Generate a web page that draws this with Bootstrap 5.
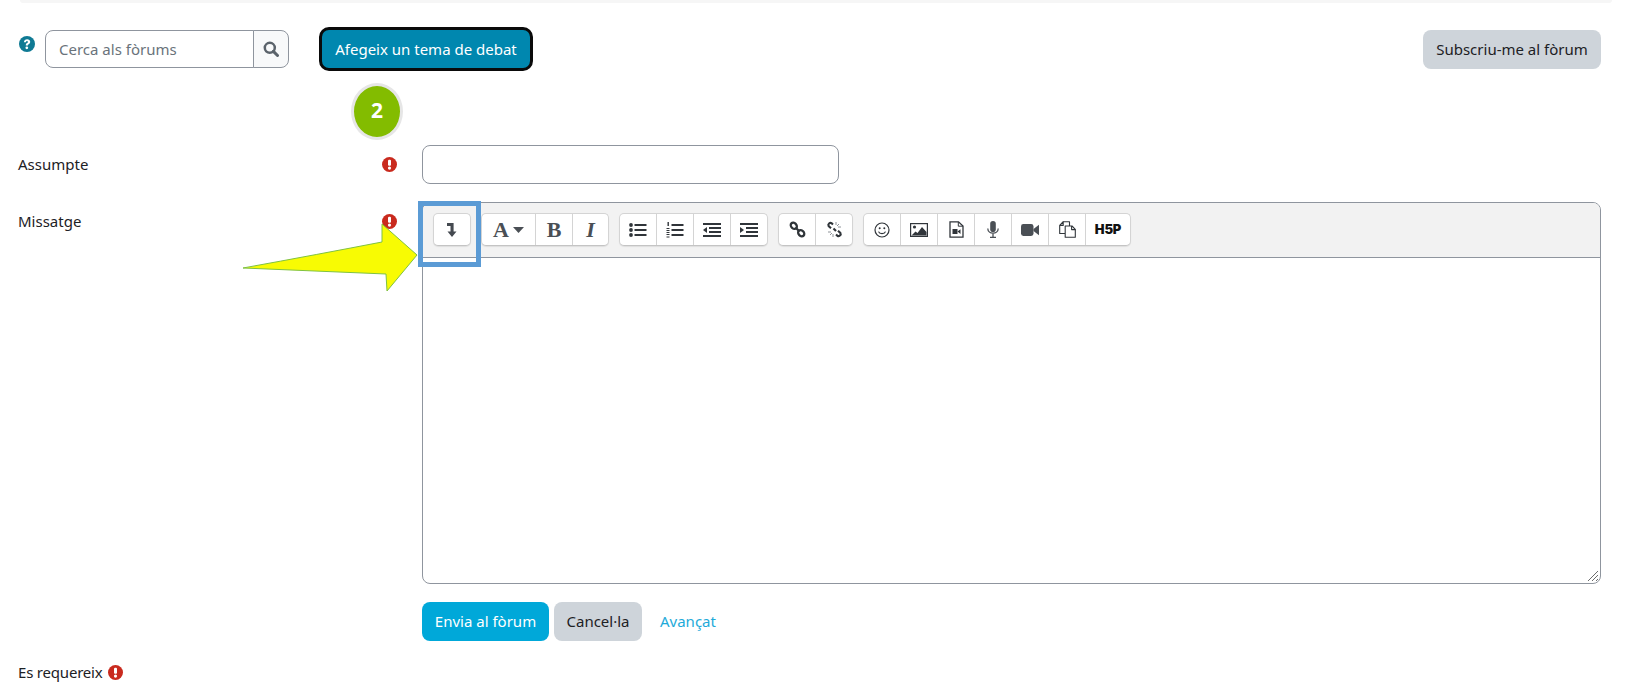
<!DOCTYPE html>
<html>
<head>
<meta charset="utf-8">
<title>Afegeix un tema de debat</title>
<link href="https://cdn.jsdelivr.net/npm/bootstrap@5.3.0/dist/css/bootstrap.min.css" rel="stylesheet">
<style>
html,body{height:693px;overflow:hidden;background:#fff}
body{position:relative;font-family:"Noto Sans","Open Sans",sans-serif;font-size:15px;color:#1d2125;font-variant-ligatures:none;font-feature-settings:"liga" 0,"locl" 0,"ccmp" 0}
.topline{height:3px;margin:0 32px 0 20px;background:#f6f6f6;border-radius:0 0 4px 4px}
.pagewrap{padding:0 43px 0 19px}
.actionbar{height:86px;padding-top:24px}
.help-ic{width:16px;height:16px;margin:9px 9px 0 0;flex:none}
.searchgrp{width:244px;height:38px;margin-top:3px;margin-left:1px}
.searchgrp .form-control{height:38px;font-size:15px;border-color:#8f959e;border-radius:8px 0 0 8px;padding:0 13px;color:#495057;box-shadow:none}
.searchgrp .form-control::placeholder{color:#6a737b;opacity:1}
.searchbtn{width:36px;background:#f8f9fa;border:1px solid #8f959e;border-radius:0 8px 8px 0;padding:0;margin-left:-1px}
.addbtn{margin-left:30px;width:214px;height:44px;background:#0087af;color:#fff;border:3px solid #0a0a0a;border-radius:10px;font-size:15px;padding:0;box-shadow:none}
.addbtn:hover{background:#0087af;color:#fff;border-color:#0a0a0a}
.subbtn{width:178px;height:39px;margin-top:3px;background:#ced4da;color:#1d2125;border:0;border-radius:8px;font-size:15px;padding:0}
.subbtn:hover{background:#ced4da;color:#1d2125}
.form-rows{--bs-gutter-x:30px}
.row-subject{padding-top:56px;height:113px}
.field-label{font-size:15px;line-height:20px;margin-top:9px;margin-left:-1px}
.labelcell{display:flex;justify-content:space-between;align-items:flex-start}
.req-ic{width:15px;height:15px;margin-top:12px;margin-right:-5px;flex:none}
.subjectinput{width:417px;height:39px;border-color:#8f959e;border-radius:8px;box-shadow:none}
.editorbox{height:382px;border:1px solid #8f959e;border-radius:8px;overflow:hidden;position:relative}
.edtoolbar{height:55px;background:#f2f2f2;border-bottom:1px solid #8f959e;padding:10px 0 0 10px;gap:10px}
.tgroup{display:flex;height:33px;background:#fff;border:1px solid #d4d4d4;border-bottom-color:#c4c4c4;border-radius:5px;box-shadow:0 1px 1px rgba(0,0,0,.08)}
.tbtn{width:37px;height:100%;display:flex;align-items:center;justify-content:center;border-right:1px solid #d4d4d4;flex:none}
.tbtn:last-child{border-right:0;width:36px}
.tgroup.solo .tbtn{width:36px}
.tbtn.wide{width:54px;gap:4px}
.tbtn svg{display:block}
.serif-glyph{font-family:"Liberation Serif",serif;font-weight:700;font-size:22px;color:#4a4f55;line-height:1}
.serif-glyph.slant{font-style:italic}
.tgroup .serif-glyph.slant{width:35px}
.tbtn.hp-mark{width:44px;font-family:Inter,"Liberation Sans",sans-serif;font-weight:900;font-size:13px;color:#111;letter-spacing:-.2px}
.resizer{position:absolute;right:1px;bottom:1px}
.formbtns{margin-top:18px;gap:5px}
.sendbtn{width:127px;height:39px;background:#00a8d9;color:#fff;border:0;border-radius:8px;font-size:15px;padding:0}
.sendbtn:hover{background:#00a8d9;color:#fff}
.cancelbtn{width:88px;height:39px;background:#ced4da;color:#1d2125;border:0;border-radius:8px;font-size:15px;padding:0}
.cancelbtn:hover{background:#ced4da;color:#1d2125}
.advlink{color:#1eaad9;text-decoration:none;margin-left:13px;font-size:15px}
.reqnote{margin-top:21px;margin-left:-1px;font-size:15px;line-height:20px;gap:5px;letter-spacing:-.2px}
.reqnote svg{width:15px;height:15px}
.step-badge{position:absolute;left:351px;top:83px;width:52px;height:57px;border-radius:50%;background:#83bc00;border:3px solid #e6e6e6;color:#fff;font-weight:700;font-size:21px;display:flex;align-items:center;justify-content:center;padding-bottom:2px}
.highlight-box{position:absolute;left:418px;top:201px;width:63px;height:66px;border:5px solid #5b9bd5}
.arrow-ov{position:absolute;left:240px;top:222px;width:180px;height:72px}
</style>
</head>
<body>
<svg width="0" height="0" style="position:absolute" aria-hidden="true">
<defs>
<symbol id="excl" viewBox="0 0 16 16"><circle cx="8" cy="8" r="8" fill="#c92a1e"/><rect x="6.4" y="2.8" width="3.2" height="6.6" rx="1.2" fill="#fff"/><circle cx="8" cy="11.8" r="1.7" fill="#fff"/></symbol>
</defs>
</svg>

<div class="topline"></div>
<div class="pagewrap">
  <div class="actionbar d-flex align-items-start">
    <svg class="help-ic" viewBox="0 0 16 16"><circle cx="8" cy="8" r="8" fill="#0f7a94"/><path d="M4.9 6.2C5 4.4 6.4 3.2 8.1 3.2c1.8 0 3.1 1.1 3.1 2.6 0 1.2-.6 1.8-1.5 2.4-.6.4-.8.6-.8 1.2H6.8c0-1.3.4-1.8 1.2-2.3.6-.4.9-.7.9-1.2s-.4-.8-.9-.8c-.6 0-1 .4-1.1 1.1z" fill="#fff"/><circle cx="7.8" cy="11.8" r="1.35" fill="#fff"/></svg>
    <div class="input-group searchgrp flex-nowrap">
      <input class="form-control" type="text" placeholder="Cerca als fòrums">
      <button class="btn searchbtn d-flex align-items-center justify-content-center" type="button" aria-label="Cerca">
        <svg width="16" height="16" viewBox="0 0 16 16"><circle cx="6.8" cy="6.8" r="5" fill="none" stroke="#5b636b" stroke-width="2.5"/><path d="M10.4 10.4l4.1 4.1" stroke="#5b636b" stroke-width="3" stroke-linecap="round"/></svg>
      </button>
    </div>
    <button class="btn addbtn" type="button">Afegeix un tema de debat</button>
    <button class="btn subbtn ms-auto" type="button">Subscriu-me al fòrum</button>
  </div>

  <div class="row form-rows row-subject">
    <div class="col-3 labelcell"><span class="field-label">Assumpte</span><svg class="req-ic"><use href="#excl"/></svg></div>
    <div class="col-9"><input class="form-control subjectinput" type="text" aria-label="Assumpte"></div>
  </div>

  <div class="row form-rows row-msg">
    <div class="col-3 labelcell"><span class="field-label">Missatge</span><svg class="req-ic"><use href="#excl"/></svg></div>
    <div class="col-9">
      <div class="editorbox">
        <div class="edtoolbar d-flex align-items-start">
          <div class="tgroup solo"><div class="tbtn"><svg width="10" height="14" viewBox="0 0 10 14"><path d="M0 0h6.6v8.4h2.9L5 14 .5 8.4h3V3H0z" fill="#444950"/></svg></div></div>
          <div class="tgroup">
            <div class="tbtn wide"><span class="serif-glyph">A</span><svg width="11" height="6" viewBox="0 0 11 6"><path d="M0 0h11L5.5 6z" fill="#4a4f55"/></svg></div>
            <div class="tbtn serif-glyph">B</div>
            <div class="tbtn serif-glyph slant">I</div>
          </div>
          <div class="tgroup">
            <div class="tbtn"><svg width="18" height="14" viewBox="0 0 18 14"><g fill="#30353a"><circle cx="2" cy="2" r="1.9"/><circle cx="2" cy="7" r="1.9"/><circle cx="2" cy="12" r="1.9"/><rect x="5.5" y="1" width="12" height="2"/><rect x="5.5" y="6" width="12" height="2"/><rect x="5.5" y="11" width="12" height="2"/></g></svg></div>
            <div class="tbtn"><svg width="18" height="16" viewBox="0 0 18 16"><g fill="#30353a"><rect x="5.5" y="2" width="12" height="2"/><rect x="5.5" y="7" width="12" height="2"/><rect x="5.5" y="12" width="12" height="2"/><rect x="1.5" y="0" width="1.4" height="4"/><rect x="0.5" y="6" width="3" height="1"/><rect x="0.5" y="8" width="3" height="1"/><rect x="0.5" y="10" width="3" height="1"/><rect x="0.5" y="12" width="3" height="1"/><rect x="0.5" y="14.5" width="3" height="1"/></g></svg></div>
            <div class="tbtn"><svg width="18" height="14" viewBox="0 0 18 14"><g fill="#30353a"><rect width="18" height="2"/><rect x="6" y="4" width="12" height="2"/><rect x="6" y="8" width="12" height="2"/><rect y="12" width="18" height="2"/><path d="M4 4v6L0 7z"/></g></svg></div>
            <div class="tbtn"><svg width="18" height="14" viewBox="0 0 18 14"><g fill="#30353a"><rect width="18" height="2"/><rect x="6" y="4" width="12" height="2"/><rect x="6" y="8" width="12" height="2"/><rect y="12" width="18" height="2"/><path d="M0 4v6l4-3z"/></g></svg></div>
          </div>
          <div class="tgroup">
            <div class="tbtn"><svg width="17" height="17" viewBox="0 0 17 17"><g fill="none" stroke="#30353a" stroke-width="2.3"><ellipse cx="4.8" cy="4.8" rx="3.4" ry="2.7" transform="rotate(45 4.8 4.8)"/><ellipse cx="12.2" cy="12.2" rx="3.4" ry="2.7" transform="rotate(45 12.2 12.2)"/><path d="M6.5 6.5l4 4"/></g></svg></div>
            <div class="tbtn"><svg width="17" height="17" viewBox="0 0 17 17"><g fill="none" stroke="#30353a" stroke-width="2.1"><path d="M7 3.5L5.5 2.2C4 1.2 1.5 3 2.6 5L5 7.2"/><path d="M10 13.5l1.5 1.3c1.5 1 4-.8 2.9-2.8L12 9.8"/><path d="M7.5 7.5L10 10"/></g><g stroke="#8d9298" stroke-width="1"><path d="M10 1v3M13 3l-2 2M15 6h-3M2 11h3M4 14l2-2M7 16v-3"/></g></svg></div>
          </div>
          <div class="tgroup">
            <div class="tbtn"><svg width="16" height="16" viewBox="0 0 16 16"><circle cx="8" cy="8" r="7" fill="none" stroke="#30353a" stroke-width="1.2"/><circle cx="5.7" cy="6.2" r="1" fill="#30353a"/><circle cx="10.3" cy="6.2" r="1" fill="#30353a"/><path d="M4.5 9.6c1 2.6 6 2.6 7 0" fill="none" stroke="#30353a" stroke-width="1.2"/></svg></div>
            <div class="tbtn"><svg width="18" height="14" viewBox="0 0 18 14"><rect x=".6" y=".6" width="16.8" height="12.8" fill="#fff" stroke="#30353a" stroke-width="1.2"/><circle cx="4.5" cy="4" r="1.6" fill="#30353a"/><path d="M1.5 12.5l4-4 2 1.5 4.5-6 4.5 5v3.5z" fill="#30353a"/></svg></div>
            <div class="tbtn"><svg width="15" height="17" viewBox="0 0 15 17"><path d="M1 .8h8.5L14 5v11.2H1z" fill="#fff" stroke="#30353a" stroke-width="1.3"/><path d="M9.3 1v4.2H14" fill="none" stroke="#30353a"/><rect x="3.5" y="8" width="5" height="5" fill="#30353a"/><path d="M8.5 10.5l3-2.3v4.8z" fill="#30353a"/></svg></div>
            <div class="tbtn"><svg width="12" height="17" viewBox="0 0 12 17"><rect x="3.2" y="0" width="5.6" height="11" rx="2.8" fill="#4a4f55"/><path d="M.8 7.5c0 6.2 10.4 6.2 10.4 0" fill="none" stroke="#4a4f55" stroke-width="1.3"/><path d="M6 12.5V16M3 16.4h6" stroke="#4a4f55" stroke-width="1.3"/></svg></div>
            <div class="tbtn"><svg width="18" height="12" viewBox="0 0 18 12"><rect width="12.5" height="12" rx="2.4" fill="#4a4f55"/><path d="M12.5 5L18 .8v10.4L12.5 7z" fill="#4a4f55"/></svg></div>
            <div class="tbtn"><svg width="17" height="17" viewBox="0 0 17 17"><g fill="none" stroke="#30353a" stroke-width="1.1" stroke-linejoin="round"><path d="M4.2 .7H10.5V5M.7 4.4L4.2 .7V4.4H.7V12.5H6"/><path d="M6.2 5H13l3.3 3.3v8H6.2z" fill="#fff"/><path d="M12.6 5v3.6h3.7"/></g></svg></div>
            <div class="tbtn hp-mark">H5P</div>
          </div>
        </div>
        <svg class="resizer" width="12" height="12" viewBox="0 0 12 12"><path d="M1 11L11 1M5 11l6-6M9 11l2-2" stroke="#6c6c6c" stroke-width="1"/></svg>
      </div>
      <div class="formbtns d-flex align-items-center">
        <button class="btn sendbtn" type="button">Envia al fòrum</button>
        <button class="btn cancelbtn" type="button">Cancel·la</button>
        <a class="advlink" href="#">Avançat</a>
      </div>
    </div>
  </div>
  <div class="reqnote d-flex align-items-center">Es requereix <svg><use href="#excl"/></svg></div>
</div>

<div class="step-badge">2</div>
<svg class="arrow-ov" viewBox="240 222 180 72"><path d="M417 255L382 224L382 242Q320 254 243 268L386 274L387 291Z" fill="#f8fb03" stroke="#7fc241" stroke-width="1"/></svg>
<div class="highlight-box"></div>
<script src="https://cdn.jsdelivr.net/npm/bootstrap@5.3.0/dist/js/bootstrap.bundle.min.js"></script>
</body>
</html>
